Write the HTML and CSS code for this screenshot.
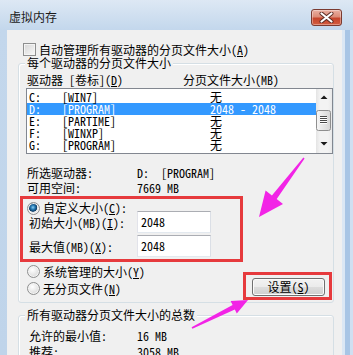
FILE: index.html
```html
<!DOCTYPE html>
<html lang="zh-CN">
<head>
<meta charset="utf-8">
<title>虚拟内存</title>
<link rel="stylesheet" href="styles.css">
</head>
<body>
<div class="window">
  <div class="titlebar">
    <span class="title">虚拟内存</span>
    <span class="close">
      <svg width="15" height="11" viewBox="0 0 15 11"><path d="M2.5 1.5 L12.5 9.5 M12.5 1.5 L2.5 9.5" stroke="#5a2a22" stroke-width="4" stroke-linecap="round"/><path d="M2.5 1.5 L12.5 9.5 M12.5 1.5 L2.5 9.5" stroke="#fff" stroke-width="2.2" stroke-linecap="round"/></svg>
    </span>
  </div>
  <div class="frame">
    <div class="panel">
      <div class="check-row"><span class="checkbox"></span><span>自动管理所有驱动器的分页文件大小(<u>A</u>)</span></div>
      <div class="group">
        <div class="legend">每个驱动器的分页文件大小</div>
        <div class="list-head"><span>驱动器 [卷标](<u>D</u>)</span><span>分页文件大小(MB)</span></div>
        <div class="listbox">
          <div class="rows">
            <div class="row"><span>C:</span><span>[WIN7]</span><span>无</span></div>
            <div class="row sel"><span>D:</span><span>[PROGRAM]</span><span>2048 - 2048</span></div>
            <div class="row"><span>E:</span><span>[PARTIME]</span><span>无</span></div>
            <div class="row"><span>F:</span><span>[WINXP]</span><span>无</span></div>
            <div class="row"><span>G:</span><span>[PROGRAM]</span><span>无</span></div>
          </div>
          <div class="scrollbar">
            <svg width="16" height="64" viewBox="0 0 16 64">
              <defs>
                <linearGradient id="thumb" x1="0" x2="1" y1="0" y2="0">
                  <stop offset="0" stop-color="#f6f6f6"/>
                  <stop offset="1" stop-color="#d6d6d6"/>
                </linearGradient>
              </defs>
              <path d="M4.5 10 L11.5 10 L8 6.5 Z" fill="#1a1a1a"/>
              <rect x="0.5" y="21.5" width="14" height="20" rx="2" fill="url(#thumb)" stroke="#8f8f8f"/>
              <path d="M4 27.5 H11 M4 29.5 H11 M4 31.5 H11 M4 33.5 H11" stroke="#4a4a4a"/>
              <path d="M4 28.5 H11 M4 30.5 H11 M4 32.5 H11 M4 34.5 H11" stroke="#ffffff"/>
              <path d="M4.5 53 L11.5 53 L8 56.5 Z" fill="#1a1a1a"/>
            </svg>
          </div>
        </div>
        <div class="info">
          <span>所选驱动器:</span><span>D:  [PROGRAM]</span>
          <span>可用空间:</span><span>7669 MB</span>
        </div>
        <div class="highlight custom">
          <div class="radio-row"><span class="radio on"></span><span>自定义大小(<u>C</u>):</span></div>
          <div class="fields">
            <span>初始大小(MB)(<u>I</u>):</span><span class="input">2048</span>
            <span>最大值(MB)(<u>X</u>):</span><span class="input">2048</span>
          </div>
        </div>
        <div class="options">
          <div class="radios">
            <div class="radio-row"><span class="radio"></span><span>系统管理的大小(<u>Y</u>)</span></div>
            <div class="radio-row"><span class="radio"></span><span>无分页文件(<u>N</u>)</span></div>
          </div>
          <div class="highlight set-box"><button class="btn">设置(<u>S</u>)</button></div>
        </div>
      </div>
      <div class="group group-total">
        <div class="legend">所有驱动器分页文件大小的总数</div>
        <div class="info totals">
          <span>允许的最小值:</span><span>16 MB</span>
          <span>推荐:</span><span>3058 MB</span>
        </div>
      </div>
    </div>
    <div class="rframe"></div>
  </div>
  <svg class="arrows" width="353" height="355" viewBox="0 0 353 355">
    <polygon points="304.6,158.5 276.7,199 283,204 259,217 265.6,190.5 271.9,195.4 303.4,157.5" fill="#f224e6"/>
    <polygon points="192.4,328.7 234.8,309.4 236.8,313.5 248,300 230.6,300.9 232.6,305 191.6,327.3" fill="#f224e6"/>
  </svg>
</div>
</body>
</html>
```

FILE: styles.css
```css
* { box-sizing: border-box; }
html, body { margin: 0; padding: 0; }
body {
  width: 353px;
  height: 355px;
  overflow: hidden;
  font-family: "Noto Sans Mono CJK SC", "Noto Sans CJK SC", "Liberation Mono", monospace;
  font-size: 12px;
  color: #000;
  background: #c4d8ee;
}
u { text-decoration: underline; text-underline-offset: 1px; }

.window {
  position: relative;
  width: 353px;
  height: 355px;
  background: linear-gradient(#dde8f4, #c3d7ec 30px, #bfd4ea);
}
.titlebar {
  height: 30px;
  display: flex;
  justify-content: space-between;
  align-items: flex-start;
  padding: 0 11px 0 9px;
}
.title {
  margin-top: 10px;
  line-height: 14px;
  font-family: "Noto Sans CJK SC", sans-serif;
  font-size: 12px;
  color: #1b1b1b;
}
.close {
  margin-top: 9px;
  width: 31px;
  height: 17px;
  border: 1px solid #7a3a30;
  border-radius: 3px;
  background: linear-gradient(#eab0a2, #dc8c78 45%, #c6452c 55%, #d35c3f);
  box-shadow: inset 0 0 0 1px rgba(255,255,255,0.35);
  display: flex;
  align-items: center;
  justify-content: center;
}

.frame {
  display: flex;
  height: 325px;
  padding-left: 7px;
}
.panel {
  width: 335px;
  background: #f0f0f0;
}
.rframe {
  width: 11px;
  background: linear-gradient(to right, #dbe7f4 0 3px, #a8c5e5 3px 8px, #cfdff1 8px);
}

.check-row {
  display: flex;
  align-items: center;
  gap: 3px;
  height: 15px;
  line-height: 15px;
  margin: 12px 0 0 16px;
}
.checkbox {
  width: 13px;
  height: 13px;
  border: 1px solid #8e8f8f;
  background: linear-gradient(135deg, #d6d6d6, #f8f8f8);
  box-shadow: inset 0 0 0 1px #f4f4f4;
}

.group {
  margin: 6px 8px 0 11px;
  border: 1px solid #d5dfe5;
  border-radius: 3px;
  box-shadow: inset 1px 1px 0 #fff;
  padding: 0 0 2px 8px;
}
.group-total { margin-top: 12px; }
.legend {
  width: fit-content;
  margin: -8px 0 0 -2px;
  padding: 0 2px;
  line-height: 14px;
  background: #f0f0f0;
}

.list-head {
  display: grid;
  grid-template-columns: 156px auto;
  margin-top: 3px;
  line-height: 14px;
}
.listbox {
  display: flex;
  height: 66px;
  margin: 1px 0 0 -1px;
  border: 1px solid #828790;
  background: #fff;
}
.rows {
  flex: 1;
  padding-top: 2px;
}
.row {
  display: grid;
  grid-template-columns: 33px 148px auto;
  height: 12px;
  line-height: 12px;
  padding-left: 2px;
  white-space: pre;
}
.row.sel { background: #3399ff; color: #fff; }
.scrollbar {
  width: 16px;
  background: linear-gradient(to right, #e4e4e4, #f3f3f3 25%, #f3f3f3 75%, #e9e9e9);
}
.scrollbar svg { display: block; }

.info {
  display: grid;
  grid-template-columns: 110px auto;
  margin-top: 11px;
  line-height: 15px;
  white-space: pre;
}

.highlight { border: 3px solid #e63a3d; }
.custom {
  width: 223px;
  margin: 1px 0 0 -7px;
  padding: 2px 0 2px 4px;
}
.radio-row {
  display: flex;
  align-items: center;
  gap: 3px;
  line-height: 14px;
}
.radio {
  width: 13px;
  height: 13px;
  border-radius: 50%;
  border: 1px solid #8e8f8f;
  background: radial-gradient(circle at 40% 35%, #ffffff, #e2e2e2 60%, #cfcfcf);
  box-shadow: inset 0 0 0 1px #f4f4f4;
}
.radio.on {
  background: radial-gradient(circle at 45% 40%, #8fd0f2 0, #2a7fb8 2px, #0c3c66 4px, #e8e8e8 4.6px, #d5d5d5);
}
.fields {
  display: grid;
  grid-template-columns: 108px 74px;
  grid-auto-rows: 22px;
  row-gap: 2px;
  align-items: center;
  margin-top: -4px;
  padding-left: 2px;
}
.input {
  height: 22px;
  border: 1px solid #abadb3;
  border-color: #abadb3 #dbdfe6 #e3e9ef #e2e3ea;
  background: #fff;
  padding-left: 3px;
  line-height: 20px;
}

.options {
  display: flex;
  justify-content: space-between;
  align-items: flex-start;
  margin-top: 1px;
}
.radios .radio-row {
  height: 17px;
  line-height: 17px;
}
.set-box {
  width: 89px;
  height: 28px;
  margin: 9px 1px 0 0;
  padding: 3px 3px 1px 6px;
}
.btn {
  display: block;
  width: 73px;
  height: 18px;
  padding: 0;
  border: 1px solid #707070;
  border-radius: 3px;
  background: linear-gradient(#f2f2f2, #ebebeb 50%, #dddddd 50%, #cfcfcf);
  box-shadow: inset 0 0 0 1px #fbfbfb;
  font: inherit;
  line-height: 16px;
  color: #000;
}

.totals {
  grid-template-columns: 108px auto;
  padding-left: 2px;
  margin-top: 6px;
  line-height: 16px;
}

.arrows {
  position: absolute;
  left: 0;
  top: 0;
  pointer-events: none;
}
```
